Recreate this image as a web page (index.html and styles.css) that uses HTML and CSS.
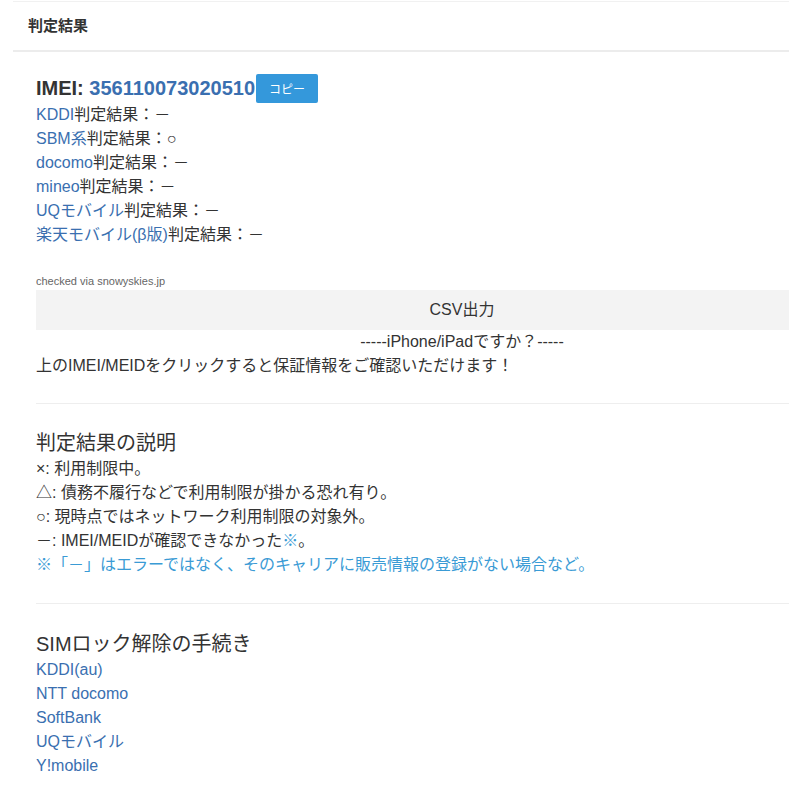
FILE: index.html
```html
<!DOCTYPE html>
<html lang="ja">
<head>
<meta charset="utf-8">
<title>判定結果</title>
<link rel="stylesheet" href="styles.css">
</head>
<body>
<div class="frame">
  <div class="panel-heading">判定結果</div>
  <div class="panel-body">
    <div class="inner">
      <div class="imei-row">
        <span class="imei-label">IMEI: </span><a class="imei-num">356110073020510</a><span class="copy-btn">コピー</span>
      </div>
      <ul class="results">
        <li><a class="lnk">KDDI</a>判定結果：－</li>
        <li><a class="lnk">SBM系</a>判定結果：○</li>
        <li><a class="lnk">docomo</a>判定結果：－</li>
        <li><a class="lnk">mineo</a>判定結果：－</li>
        <li><a class="lnk">UQモバイル</a>判定結果：－</li>
        <li><a class="lnk">楽天モバイル(β版)</a>判定結果：－</li>
      </ul>
      <div class="checked">checked via snowyskies.jp</div>
      <div class="csv">CSV出力</div>
      <div class="iphone">-----iPhone/iPadですか？-----</div>
      <div class="plain">上のIMEI/MEIDをクリックすると保証情報をご確認いただけます！</div>
      <hr class="sep">
      <h3 class="sec-title">判定結果の説明</h3>
      <ul class="results">
        <li>×: 利用制限中。</li>
        <li>△: 債務不履行などで利用制限が掛かる恐れ有り。</li>
        <li>○: 現時点ではネットワーク利用制限の対象外。</li>
        <li>－: IMEI/MEIDが確認できなかった<span class="note">※</span>。</li>
        <li class="note">※「－」はエラーではなく、そのキャリアに販売情報の登録がない場合など。</li>
      </ul>
      <hr class="sep sep-wide">
      <h3 class="sec-title">SIMロック解除の手続き</h3>
      <ul class="results">
        <li><a class="lnk">KDDI(au)</a></li>
        <li><a class="lnk">NTT docomo</a></li>
        <li><a class="lnk">SoftBank</a></li>
        <li><a class="lnk">UQモバイル</a></li>
        <li><a class="lnk">Y!mobile</a></li>
      </ul>
    </div>
  </div>
</div>
</body>
</html>
```
FILE: styles.css
```css
html, body {
  margin: 0;
  padding: 0;
  background: #fff;
}
body {
  font-family: "Liberation Sans", Arial, "Noto Sans CJK JP", sans-serif;
  color: #333;
  font-size: 16px;
  line-height: 24px;
}
.frame {
  margin-left: 13px;
  width: 776px;
  overflow: hidden;
  padding-top: 1px;
}
.panel-heading {
  height: 48px;
  border-top: 1px solid #f1f1f1;
  border-bottom: 2px solid #ececec;
  box-sizing: content-box;
  padding-left: 15px;
  font-size: 15px;
  font-weight: bold;
  line-height: 48px;
  color: #333;
}
.panel-body {
  padding: 22px 0 30px 23px;
}
.inner {
  width: 852px;
}
.imei-row {
  display: flex;
  align-items: center;
  height: 29px;
  font-size: 20px;
  font-weight: bold;
  line-height: 29px;
}
.imei-label {
  white-space: pre;
  color: #333;
}
.imei-num {
  color: #3a6fb0;
}
.copy-btn {
  margin-left: 1px;
  height: 29px;
  width: 62px;
  background: #3498db;
  border-radius: 2px;
  color: #fff;
  font-size: 12px;
  font-weight: normal;
  text-align: center;
  line-height: 29px;
  font-family: "Noto Sans CJK JP", sans-serif;
}
.results {
  list-style: none;
  margin: 0;
  padding: 0;
}
.results li {
  height: 24px;
  line-height: 24px;
}
.lnk {
  color: #3a6fb0;
}
.note {
  color: #3a9bd5;
}
.checked {
  margin-top: 27px;
  font-size: 11px;
  line-height: 14px;
  color: #666;
}
.csv {
  margin-top: 2px;
  height: 40px;
  line-height: 40px;
  background: #f3f3f3;
  text-align: center;
  color: #333;
}
.iphone {
  text-align: center;
}
.plain {
  height: 24px;
}
.sep {
  margin: 25px 0 25px 0;
  border: 0;
  border-top: 1px solid #eeeeee;
  height: 0;
}
.sep-wide {
  margin: 26px 0 26px 0;
}
.sec-title {
  margin: 0;
  font-size: 20px;
  font-weight: normal;
  line-height: 28px;
  color: #333;
}
```
